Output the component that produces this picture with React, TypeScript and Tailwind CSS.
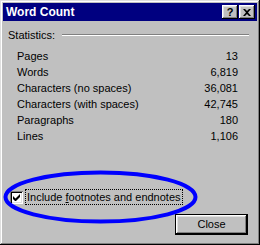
import React from "react";

const rows: [string, string][] = [
  ["Pages", "13"],
  ["Words", "6,819"],
  ["Characters (no spaces)", "36,081"],
  ["Characters (with spaces)", "42,745"],
  ["Paragraphs", "180"],
  ["Lines", "1,106"],
];

function TitleBtn({ children }: { children: React.ReactNode }) {
  return (
    <div className="w-[16px] h-[14px] bg-[#c0c0c0] shadow-[inset_-1px_-1px_#000,inset_1px_1px_#fff,inset_-2px_-2px_#808080,inset_2px_2px_#dfdfdf] flex items-center justify-center text-black font-bold text-[11px] leading-none">
      {children}
    </div>
  );
}

export default function App() {
  return (
    <div
      className="relative w-[260px] h-[245px] bg-[#c0c0c0] p-[3px] shadow-[inset_-1px_-1px_#000,inset_1px_1px_#dfdfdf,inset_-2px_-2px_#808080,inset_2px_2px_#fff] text-black text-[11px] leading-none"
      style={{ fontFamily: '"Liberation Sans", Arial, sans-serif' }}
    >
      <div className="h-[18px] bg-[#000080] flex items-center justify-between pl-[3px] pr-[2px]">
        <span className="text-white font-bold text-[12px]">Word Count</span>
        <div className="flex gap-[1px]">
          <TitleBtn>?</TitleBtn>
          <TitleBtn>
            <svg width="8" height="7" viewBox="0 0 8 7">
              <path d="M0 0h2l2 2 2-2h2L5 3.5 8 7H6L4 5 2 7H0l3-3.5z" fill="#000" />
            </svg>
          </TitleBtn>
        </div>
      </div>

      <div className="flex items-center mt-[8px] pl-[5px] pr-[8px] h-[12px]">
        <span>Statistics:</span>
        <div className="flex-1 ml-[7px] border-t border-t-[#808080] border-b border-b-white h-0" />
      </div>

      <div className="flex flex-col mt-[7px] pl-[14px] pr-[19px]">
        {rows.map(([k, v]) => (
          <div key={k} className="flex justify-between h-[16px] items-center">
            <span>{k}</span>
            <span>{v}</span>
          </div>
        ))}
      </div>

      <div className="flex items-center mt-[45px] pl-[7px]">
        <div className="w-[13px] h-[13px] bg-white shadow-[inset_1px_1px_#808080,inset_-1px_-1px_#fff,inset_2px_2px_#000,inset_-2px_-2px_#dfdfdf] flex items-center justify-center">
          <svg width="7" height="7" viewBox="0 0 7 7">
            <path d="M0 2v3l2 2h1l4-4V0L2.5 4.5z" fill="#000" />
          </svg>
        </div>
        <div className="ml-[2px] px-[1px] h-[16px] flex items-center border border-dotted border-black">
          <span>
            Include <u>f</u>ootnotes and endnotes
          </span>
        </div>
      </div>

      <div className="flex justify-end mt-[9px] pr-[9px]">
        <button className="w-[73px] h-[21px] bg-[#c0c0c0] border border-black shadow-[inset_-1px_-1px_#000,inset_1px_1px_#fff,inset_-2px_-2px_#808080,inset_2px_2px_#dfdfdf] flex items-center justify-center text-[11px]">
          Close
        </button>
      </div>

      <svg className="absolute left-0 top-0 pointer-events-none" width="260" height="245">
        <ellipse cx="100.5" cy="197" rx="95" ry="24.5" fill="none" stroke="#0000ff" strokeWidth="4" />
      </svg>
    </div>
  );
}
